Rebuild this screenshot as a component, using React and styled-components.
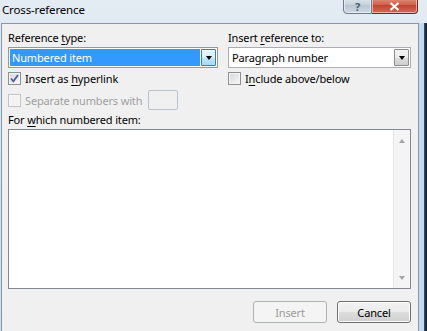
import styled, { createGlobalStyle } from "styled-components";

const GlobalStyle = createGlobalStyle`
  html, body {
    margin: 0;
    padding: 0;
  }
  body {
    width: 427px;
    height: 331px;
    overflow: hidden;
    font-family: "Noto Sans", "Open Sans", sans-serif;
    font-size: 11px;
    letter-spacing: -0.15px;
    color: #000;
  }
`;

const Window = styled.div`
  width: 427px;
  height: 331px;
  display: flex;
  flex-direction: column;
  background: linear-gradient(#e3ebf3, #cfdcea);
  overflow: hidden;
`;

const TitleBar = styled.div`
  height: 23px;
  flex: none;
  display: flex;
  justify-content: space-between;
  align-items: flex-start;
  padding: 0 9px 0 2px;
`;

const Title = styled.div`
  line-height: 19px;
  font-size: 11.5px;
  color: #000;
`;

const Captions = styled.div`
  display: flex;
  margin-top: -5px;
`;

const CaptionButton = styled.div`
  width: ${(p) => p.$w}px;
  height: 19px;
  display: flex;
  align-items: center;
  justify-content: center;
  padding-top: 4px;
  box-sizing: border-box;
  border: 1px solid ${(p) => (p.$close ? "#6d2a22" : "#6f7b88")};
  border-left-width: ${(p) => (p.$close ? 0 : 1)}px;
  border-radius: ${(p) => (p.$close ? "0 0 4px 0" : "0 0 0 4px")};
  background: ${(p) =>
    p.$close
      ? "linear-gradient(#e8a493, #d0614c 50%, #c2422c 51%, #d26b55)"
      : "linear-gradient(#e6edf4, #c8d3de 50%, #b7c4d2 51%, #cfd9e3)"};
  color: ${(p) => (p.$close ? "#fff" : "#4c5a6a")};
  font-weight: bold;
  font-size: 11px;
  box-shadow: inset 0 0 0 1px rgba(255, 255, 255, 0.5);
`;

const Body = styled.div`
  flex: 1;
  display: flex;
  min-height: 0;
`;

const Client = styled.div`
  margin-left: 1px;
  width: 418px;
  box-sizing: border-box;
  border: 1px solid #8796a8;
  border-bottom: none;
  background: #f0f0f0;
  padding: 6px 8px 0 6px;
  display: flex;
  flex-direction: column;
`;

const RightFrame = styled.div`
  flex: 1;
  background: linear-gradient(to right, #c3d9ee 0 5px, #3d5470 5px, #1a2333 7px);
`;

const Grid = styled.div`
  display: grid;
  grid-template-columns: 210px 183px;
  column-gap: 10px;
`;

const Label = styled.div`
  line-height: 16px;
  height: 16px;
  margin-top: ${(p) => p.$mt || 0}px;
  white-space: nowrap;
  color: ${(p) => (p.$disabled ? "#a0a0a0" : "#000")};
`;

const Combo = styled.div`
  margin-top: 1px;
  height: 21px;
  box-sizing: border-box;
  border: 1px solid ${(p) => (p.$focus ? "#8e9aa8" : "#abadb3")};
  background: #fff;
  display: flex;
  padding: 1px;
`;

const ComboText = styled.div`
  flex: 1;
  line-height: 17px;
  padding-left: 2px;
  background: ${(p) => (p.$selected ? "#3399ff" : "transparent")};
  color: ${(p) => (p.$selected ? "#fff" : "#000")};
  white-space: nowrap;
`;

const DropButton = styled.div`
  width: 15px;
  box-sizing: border-box;
  margin-left: 1px;
  border: 1px solid ${(p) => (p.$focus ? "#3c7fb1" : "#8b8b8b")};
  border-radius: 1px;
  background: ${(p) =>
    p.$focus
      ? "linear-gradient(#eaf6fd, #d9f0fc 50%, #bee6fd 51%, #a7d9f5)"
      : "linear-gradient(#f2f2f2, #ebebeb 50%, #dddddd 51%, #cfcfcf)"};
  display: flex;
  align-items: center;
  justify-content: center;
`;

const Arrow = styled.div`
  width: 0;
  height: 0;
  border-left: 3.5px solid transparent;
  border-right: 3.5px solid transparent;
  border-${(p) => (p.$up ? "bottom" : "top")}: 4px solid ${(p) => p.$color || "#000"};
`;

const CheckRow = styled.div`
  display: flex;
  align-items: center;
  gap: 4px;
  height: ${(p) => p.$h || 13}px;
  margin-top: ${(p) => p.$mt || 0}px;
  color: ${(p) => (p.$disabled ? "#a0a0a0" : "#000")};
  white-space: nowrap;
`;

const Box = styled.div`
  width: 13px;
  height: 13px;
  flex: none;
  box-sizing: border-box;
  border: 1px solid ${(p) => (p.$disabled ? "#c2c2c2" : "#8e8f8f")};
  background: ${(p) =>
    p.$disabled ? "#f2f2f2" : "linear-gradient(135deg, #d5d8dc, #f7f7f7)"};
  box-shadow: inset 0 0 0 1px ${(p) => (p.$disabled ? "#f7f7f7" : "#f4f4f4")};
  display: flex;
  align-items: center;
  justify-content: center;
`;

const CheckText = styled.span`
  min-width: ${(p) => p.$w || 0}px;
`;

const SmallInput = styled.div`
  width: 30px;
  height: 20px;
  box-sizing: border-box;
  border: 1px solid #b8c2cf;
  border-radius: 2px;
  background: #f0f0f0;
`;

const U = styled.span`
  text-decoration: underline;
  text-underline-offset: 2px;
`;

const ListBox = styled.div`
  margin-top: 1px;
  width: 403px;
  height: 160px;
  box-sizing: border-box;
  border: 1px solid #828790;
  background: #fff;
  display: flex;
  justify-content: flex-end;
`;

const ScrollBar = styled.div`
  width: 16px;
  border-left: 1px solid #e6e6e6;
  background: #f4f4f4;
  display: flex;
  flex-direction: column;
  justify-content: space-between;
  align-items: center;
  padding: 9px 0 8px;
`;

const ButtonRow = styled.div`
  display: flex;
  justify-content: flex-end;
  gap: 10px;
  margin-top: 12px;
  width: 403px;
`;

const Button = styled.div`
  width: 74px;
  height: 22px;
  box-sizing: border-box;
  border: 1px solid ${(p) => (p.$disabled ? "#adb2b5" : "#707070")};
  border-radius: 3px;
  background: ${(p) =>
    p.$disabled
      ? "#f4f4f4"
      : "linear-gradient(#f2f2f2, #ebebeb 50%, #dddddd 51%, #cfcfcf)"};
  box-shadow: inset 0 0 0 1px ${(p) => (p.$disabled ? "#f4f4f4" : "#fcfcfc")};
  color: ${(p) => (p.$disabled ? "#9a9a9a" : "#000")};
  display: flex;
  align-items: center;
  justify-content: center;
`;

function Check() {
  return (
    <svg width="9" height="9" viewBox="0 0 9 9">
      <path
        d="M1 4.5 L3.4 7.3 L8 1"
        fill="none"
        stroke="#4a5f97"
        strokeWidth="1.8"
      />
    </svg>
  );
}

export default function App() {
  return (
    <>
      <GlobalStyle />
      <Window>
        <TitleBar>
          <Title>Cross-reference</Title>
          <Captions>
            <CaptionButton $w={29}>?</CaptionButton>
            <CaptionButton $w={46} $close>
              <svg width="11" height="9" viewBox="0 0 11 9">
                <path
                  d="M1.5 1 L9.5 8 M9.5 1 L1.5 8"
                  stroke="#fff"
                  strokeWidth="2.2"
                />
              </svg>
            </CaptionButton>
          </Captions>
        </TitleBar>
        <Body>
          <Client>
            <Grid>
              <Label>
                Reference <U>t</U>ype:
              </Label>
              <Label>
                Insert <U>r</U>eference to:
              </Label>
              <Combo $focus>
                <ComboText $selected>Numbered item</ComboText>
                <DropButton $focus>
                  <Arrow />
                </DropButton>
              </Combo>
              <Combo>
                <ComboText>Paragraph number</ComboText>
                <DropButton>
                  <Arrow />
                </DropButton>
              </Combo>
              <CheckRow $mt={4}>
                <Box>
                  <Check />
                </Box>
                <span>
                  Insert as <U>h</U>yperlink
                </span>
              </CheckRow>
              <CheckRow $mt={4}>
                <Box />
                <span>
                  I<U>n</U>clude above/below
                </span>
              </CheckRow>
            </Grid>
            <CheckRow $mt={5} $h={20} $disabled>
              <Box $disabled />
              <CheckText $w={119}>Separate numbers with</CheckText>
              <SmallInput />
            </CheckRow>
            <Label $mt={2}>
              For <U>w</U>hich numbered item:
            </Label>
            <ListBox>
              <ScrollBar>
                <Arrow $up $color="#a3a3a3" />
                <Arrow $color="#a3a3a3" />
              </ScrollBar>
            </ListBox>
            <ButtonRow>
              <Button $disabled>Insert</Button>
              <Button>Cancel</Button>
            </ButtonRow>
          </Client>
          <RightFrame />
        </Body>
      </Window>
    </>
  );
}
